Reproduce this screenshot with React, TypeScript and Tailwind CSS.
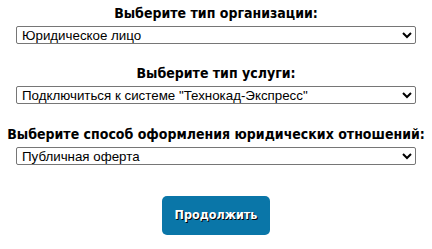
import React from "react";

const headFont = { fontFamily: '"DejaVu Sans Condensed", "DejaVu Sans", sans-serif', fontStretch: "condensed" as const };

function Group({ label, value, className }: { label: string; value: string; className?: string }) {
  return (
    <div className={"flex flex-col items-center " + (className ?? "")}>
      <div className="text-[14px] leading-[18px] font-bold text-black text-center whitespace-nowrap" style={headFont}>
        {label}
      </div>
      <select
        defaultValue={value}
        className="mt-[4px] w-[400px] h-[18px] border border-[#767676] rounded-[2px] bg-white text-black text-[13.33px] pl-[1px]"
        style={{ fontFamily: '"Liberation Sans", Arial, sans-serif' }}
      >
        <option>{value}</option>
      </select>
    </div>
  );
}

export default function App() {
  return (
    <div className="w-[432px] h-[249px] bg-white flex flex-col items-center pt-[4px]">
      <Group label="Выберите тип организации:" value="Юридическое лицо" />
      <Group label="Выберите тип услуги:" value='Подключиться к системе "Технокад-Экспресс"' className="mt-[20px]" />
      <Group label="Выберите способ оформления юридических отношений:" value="Публичная оферта" className="mt-[21px]" />
      <button
        className="mt-[31px] w-[108px] h-[39px] rounded-[5px] bg-[#0a76a8] text-white font-bold text-[12.5px]"
        style={{ ...headFont, textShadow: "1px 1px 0 #000" }}
      >
        Продолжить
      </button>
    </div>
  );
}
